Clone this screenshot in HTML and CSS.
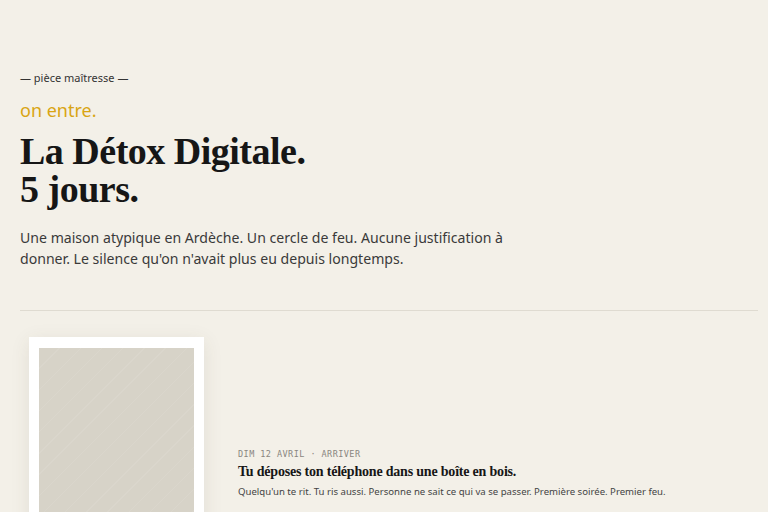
FILE: index.html
```html
<!DOCTYPE html>
<html lang="fr">
<head>
<meta charset="utf-8">
<link rel="stylesheet" href="styles.css">
</head>
<body>
<main class="page">
  <section class="hero">
    <p class="eyebrow">— pièce maîtresse —</p>
    <p class="kicker">on entre.</p>
    <h1 class="title">La Détox Digitale.<br>5 jours.</h1>
    <p class="lede">Une maison atypique en Ardèche. Un cercle de feu. Aucune justification à donner. Le silence qu'on n'avait plus eu depuis longtemps.</p>
  </section>
  <hr class="rule">
  <section class="day">
    <div class="polaroid"><div class="photo"></div></div>
    <div class="day-text">
      <p class="meta">DIM 12 AVRIL · ARRIVER</p>
      <h2 class="day-title">Tu déposes ton téléphone dans une boîte en bois.</h2>
      <p class="day-desc">Quelqu'un te rit. Tu ris aussi. Personne ne sait ce qui va se passer. Première soirée. Premier feu.</p>
    </div>
  </section>
</main>
</body>
</html>
```

FILE: styles.css
```css
* { box-sizing: border-box; }
html, body { margin: 0; padding: 0; }
body {
  background: #f3f0e8;
  color: #1a1a1a;
  font-family: "Noto Sans", "Open Sans", sans-serif;
  overflow: hidden;
}
.page {
  padding: 70px 10px 0 20px;
}
.hero p, .hero h1 { margin: 0; }
.eyebrow {
  font-size: 11px;
  line-height: 16px;
  color: #333;
}
.kicker {
  margin-top: 12px !important;
  font-size: 18px;
  line-height: 24px;
  color: #d9a514;
}
.title {
  margin-top: 10px !important;
  font-family: "Liberation Serif", "Times New Roman", serif;
  font-weight: 700;
  font-size: 38px;
  line-height: 38px;
  letter-spacing: -0.5px;
  color: #161616;
}
.lede {
  margin-top: 19px !important;
  max-width: 510px;
  font-size: 14.1px;
  line-height: 21px;
  color: #3a3a3a;
}
.rule {
  margin: 41px 0 0;
  border: 0;
  border-top: 1px solid #dfdbd1;
}
.day {
  display: flex;
  align-items: flex-start;
  gap: 34px;
  margin-top: 26px;
  padding-left: 9px;
}
.polaroid {
  flex: 0 0 175px;
  background: #fff;
  padding: 11px 10px;
  box-shadow: 0 4px 18px rgba(80, 70, 50, 0.10);
}
.photo {
  height: 230px;
  background-color: #d7d3c8;
  background-image: repeating-linear-gradient(135deg, rgba(255,255,255,0) 0 14px, rgba(255,255,255,0.08) 14px 15px);
}
.day-text {
  padding-top: 111px;
}
.day-text p, .day-text h2 { margin: 0; }
.meta {
  font-family: "DejaVu Sans Mono", "Liberation Mono", monospace;
  font-size: 8.5px;
  line-height: 12px;
  letter-spacing: 0.45px;
  color: #8a8680;
}
.day-title {
  margin-top: 2px !important;
  font-family: "Liberation Serif", "Times New Roman", serif;
  font-weight: 700;
  font-size: 14px;
  line-height: 20px;
  letter-spacing: -0.2px;
  color: #161616;
}
.day-desc {
  margin-top: 2px !important;
  font-size: 9.6px;
  line-height: 15px;
  color: #444;
}
```
